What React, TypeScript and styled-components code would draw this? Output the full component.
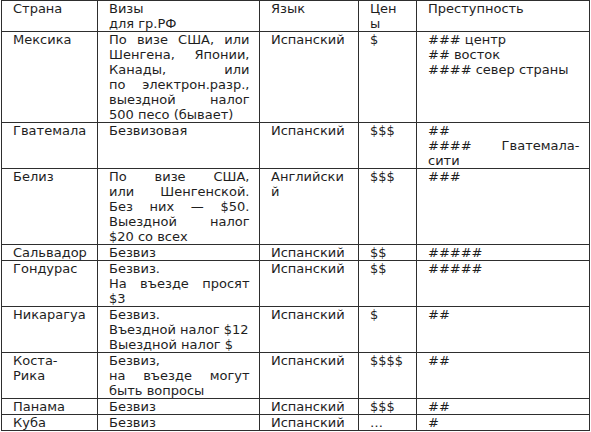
import React from "react";
import styled, { createGlobalStyle } from "styled-components";

const Global = createGlobalStyle`
  html, body { margin: 0; padding: 0; background: #ffffff; }
  body { font-family: "DejaVu Sans", "Liberation Sans", sans-serif; }
`;

const Table = styled.table`
  margin-left: 1px;
  width: 589px;
  table-layout: fixed;
  border-collapse: separate;
  border-spacing: 0;
  border-top: 1px solid #2e2e2e;
  border-left: 1px solid #2e2e2e;
  font-family: "DejaVu Sans", "Liberation Sans", sans-serif;
  font-size: 13px;
  line-height: 15px;
  color: #1e1e1e;
`;

const Cell = styled.td<{ $w?: number }>`
  box-sizing: border-box;
  ${(p) => (p.$w ? `width: ${p.$w}px;` : "")}
  padding: 0 9.5px 0 11px;
  vertical-align: top;
  text-align: justify;
  overflow-wrap: break-word;
  border-right: 1px solid #2e2e2e;
  border-bottom: 1px solid #2e2e2e;
  font-weight: normal;
`;

const Head = styled(Cell).attrs({ as: "th" })`
  text-align: left;
`;

type Row = [React.ReactNode, React.ReactNode, string, string, React.ReactNode];

const NB = "\u00A0";

const rows: Row[] = [
  [
    "Мексика",
    `По визе США, или Шенгена, Японии, Канады, или по${NB}электрон.разр., выездной налог 500${NB}песо (бывает)`,
    "Испанский",
    "$",
    <>### центр<br />## восток<br />#### север страны</>,
  ],
  ["Гватемала", "Безвизовая", "Испанский", "$$$", <>##<br />#### Гватемала-сити</>],
  [
    "Белиз",
    `По визе США, или${NB}Шенгенской. Без них — $50. Выездной налог $20${NB}со всех`,
    "Английский",
    "$$$",
    "###",
  ],
  ["Сальвадор", "Безвиз", "Испанский", "$$", "#####"],
  ["Гондурас", <>Безвиз.<br />На въезде просят $3</>, "Испанский", "$$", "#####"],
  [
    "Никарагуа",
    <>Безвиз.<br />Въездной налог $12<br />Выездной налог $</>,
    "Испанский",
    "$",
    "##",
  ],
  ["Коста-Рика", <>Безвиз,<br />на въезде могут быть вопросы</>, "Испанский", "$$$$", "##"],
  ["Панама", "Безвиз", "Испанский", "$$$", "##"],
  ["Куба", "Безвиз", "Испанский", "…", "#"],
];

const widths = [96, 162, 99, 58, 173];

export default function App() {
  return (
    <>
      <Global />
      <Table>
        <thead>
          <tr>
            <Head $w={widths[0]}>Страна</Head>
            <Head $w={widths[1]}>Визы<br />для гр.РФ</Head>
            <Head $w={widths[2]}>Язык</Head>
            <Head $w={widths[3]}>Цены</Head>
            <Head $w={widths[4]}>Преступность</Head>
          </tr>
        </thead>
        <tbody>
          {rows.map((r, i) => (
            <tr key={i}>
              {r.map((c, j) => (
                <Cell key={j}>{c}</Cell>
              ))}
            </tr>
          ))}
        </tbody>
      </Table>
    </>
  );
}
